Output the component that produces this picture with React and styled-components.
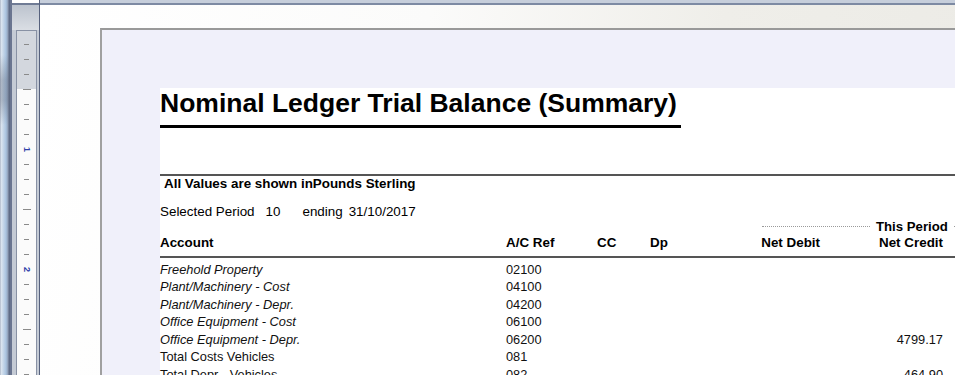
import React from "react";
import styled, { createGlobalStyle } from "styled-components";

const GlobalStyle = createGlobalStyle`
  html, body { margin: 0; padding: 0; background: #ffffff; overflow: hidden; }
  body { font-family: "Liberation Sans", Arial, sans-serif; }
`;

const Frame = styled.div`
  display: flex;
  width: 959px;
  height: 375px;
  overflow: hidden;
  background: #ffffff;
`;

const WindowEdge = styled.div`
  flex: 0 0 10px;
  background:
    linear-gradient(to bottom, rgba(90, 100, 120, 0) 0px, rgba(90, 100, 120, 0) 55px, rgba(90, 100, 120, 0.35) 80px, rgba(90, 100, 120, 0.35) 100px, rgba(90, 100, 120, 0) 125px),
    linear-gradient(
      to right,
      #9aa5b8 0px,
      #dfe7f0 1px,
      #c9d9ea 3px,
      #a9c3df 6px,
      #8f9db4 8px,
      #5f6c86 9px,
      #5f6c86 10px
    );
`;

const RulerColumn = styled.div`
  flex: 0 0 30px;
  box-sizing: border-box;
  border-left: 2px solid #6a7590;
  border-right: 1px solid #56617d;
  padding: 30px 2px 0 4px;
  background: linear-gradient(
    to bottom,
    #ffffff 0px,
    #ffffff 3px,
    #6f7b95 3px,
    #6f7b95 5px,
    #bcc3ce 5px,
    #dadee4 30px,
    #c5cbd5 30px
  );
`;

const Ruler = styled.div`
  box-sizing: border-box;
  width: 21px;
  height: 400px;
  border: 1px solid #8891a4;
  border-bottom: none;
  padding-top: 5.5px;
  display: flex;
  flex-direction: column;
  background: linear-gradient(to bottom, #d3d7de 0px, #d3d7de 58px, #fbfbfb 58px);
`;

const RulerCell = styled.div`
  flex: 0 0 15px;
  display: flex;
  align-items: center;
  justify-content: center;
`;

const Tick = styled.span`
  display: block;
  width: ${(p) => (p.$long ? 8 : 5)}px;
  height: 1px;
  background: #8a8a8a;
`;

const RulerNumber = styled.span`
  display: block;
  font-family: "Liberation Sans", Arial, sans-serif;
  font-size: 9px;
  font-weight: bold;
  line-height: 9px;
  color: #2f3fa8;
  transform: rotate(90deg);
`;

const Main = styled.div`
  flex: 1 1 auto;
  display: flex;
  flex-direction: column;
  min-width: 0;
`;

const TopBar = styled.div`
  flex: 0 0 5px;
  box-sizing: border-box;
  background: #c6cedb;
  border-bottom: 2px solid #7d8aa3;
`;

const Canvas = styled.div`
  flex: 1 1 auto;
  padding: 23px 0 0 60px;
  overflow: hidden;
  background: linear-gradient(100deg, #ffffff 0%, #fbfbfa 40%, #efeee9 70%, #ecebe6 100%);
`;

const Page = styled.div`
  width: 1000px;
  height: 500px;
  box-sizing: border-box;
  border-top: 2px solid #999999;
  border-left: 2px solid #a0a0a0;
  padding: 58px 0 0 58px;
  background: #f0f0fa;
`;

const PrintArea = styled.div`
  background: #ffffff;
  height: 100%;
  display: flex;
  flex-direction: column;
  color: #000;
  font-family: "Liberation Sans", Arial, sans-serif;
`;

const Title = styled.h1`
  margin: 0;
  font-size: 26.5px;
  line-height: 30px;
  font-weight: bold;
  white-space: nowrap;
`;

const TitleRule = styled.div`
  width: 521px;
  height: 3px;
  margin-top: 7px;
  background: #000;
`;

const SectionRule = styled.div`
  height: 2px;
  margin-top: ${(p) => p.$top}px;
  background: #555555;
`;

const Note = styled.div`
  font-size: 13.4px;
  font-weight: bold;
  line-height: 15px;
  padding-left: 4px;
  white-space: nowrap;
`;

const PeriodLine = styled.div`
  display: flex;
  margin-top: 12.5px;
  font-size: 13.4px;
  line-height: 15px;
  white-space: nowrap;
`;

const PeriodPart = styled.span`
  margin-left: ${(p) => p.$gap || 0}px;
`;

const BandRow = styled.div`
  display: flex;
  align-items: center;
  margin-top: 0.5px;
  padding-left: 602px;
  font-size: 13.2px;
  font-weight: bold;
  line-height: 15px;
  white-space: nowrap;
`;

const Dots = styled.span`
  display: block;
  width: ${(p) => p.$w}px;
  height: 0;
  border-top: 1px dotted #9a9a9a;
`;

const BandLabel = styled.span`
  margin: 0 6px;
`;

const Grid = styled.div`
  display: grid;
  grid-template-columns: 346px 91px 53px 70px 100px 123px 1fr;
  white-space: nowrap;
`;

const HeaderGrid = styled(Grid)`
  margin-top: 1px;
  font-size: 13.4px;
  font-weight: bold;
  line-height: 15px;
`;

const RowGrid = styled(Grid)`
  font-size: 12.8px;
  line-height: 17.5px;
  color: #111;
`;

const Body = styled.div`
  margin-top: 3px;
  display: flex;
  flex-direction: column;
`;

const Cell = styled.span`
  text-align: ${(p) => (p.$right ? "right" : "left")};
  font-style: ${(p) => (p.$italic ? "italic" : "normal")};
`;

const RightEdge = styled.div`
  flex: 0 0 4px;
  background: #ffffff;
`;

const ticks = Array.from({ length: 24 }, (_, i) => i + 1);

const rows = [
  { name: "Freehold Property", ref: "02100", italic: true },
  { name: "Plant/Machinery - Cost", ref: "04100", italic: true },
  { name: "Plant/Machinery - Depr.", ref: "04200", italic: true },
  { name: "Office Equipment - Cost", ref: "06100", italic: true },
  { name: "Office Equipment - Depr.", ref: "06200", italic: true, credit: "4799.17" },
  { name: "Total Costs Vehicles", ref: "081" },
  { name: "Total Depr - Vehicles", ref: "082", credit: "464.90" },
];

export default function App() {
  return (
    <>
      <GlobalStyle />
      <Frame>
        <WindowEdge />
        <RulerColumn>
          <Ruler>
            {ticks.map((t) => (
              <RulerCell key={t}>
                {t % 8 === 0 ? (
                  <RulerNumber>{t / 8}</RulerNumber>
                ) : (
                  <Tick $long={t % 4 === 0} />
                )}
              </RulerCell>
            ))}
          </Ruler>
        </RulerColumn>
        <Main>
          <TopBar />
          <Canvas>
            <Page>
              <PrintArea>
                <Title>Nominal Ledger Trial Balance (Summary)</Title>
                <TitleRule />
                <SectionRule $top={46} />
                <Note>All Values are shown inPounds Sterling</Note>
                <PeriodLine>
                  <PeriodPart>Selected Period</PeriodPart>
                  <PeriodPart $gap={11}>10</PeriodPart>
                  <PeriodPart $gap={22}>ending</PeriodPart>
                  <PeriodPart $gap={6}>31/10/2017</PeriodPart>
                </PeriodLine>
                <BandRow>
                  <Dots $w={108} />
                  <BandLabel>This Period</BandLabel>
                  <Dots $w={120} />
                </BandRow>
                <HeaderGrid>
                  <Cell>Account</Cell>
                  <Cell>A/C Ref</Cell>
                  <Cell>CC</Cell>
                  <Cell>Dp</Cell>
                  <Cell $right>Net Debit</Cell>
                  <Cell $right>Net Credit</Cell>
                  <Cell />
                </HeaderGrid>
                <SectionRule $top={5.5} />
                <Body>
                  {rows.map((r) => (
                    <RowGrid key={r.ref}>
                      <Cell $italic={r.italic}>{r.name}</Cell>
                      <Cell>{r.ref}</Cell>
                      <Cell />
                      <Cell />
                      <Cell $right>{r.debit || ""}</Cell>
                      <Cell $right>{r.credit || ""}</Cell>
                      <Cell />
                    </RowGrid>
                  ))}
                </Body>
              </PrintArea>
            </Page>
          </Canvas>
        </Main>
        <RightEdge />
      </Frame>
    </>
  );
}
